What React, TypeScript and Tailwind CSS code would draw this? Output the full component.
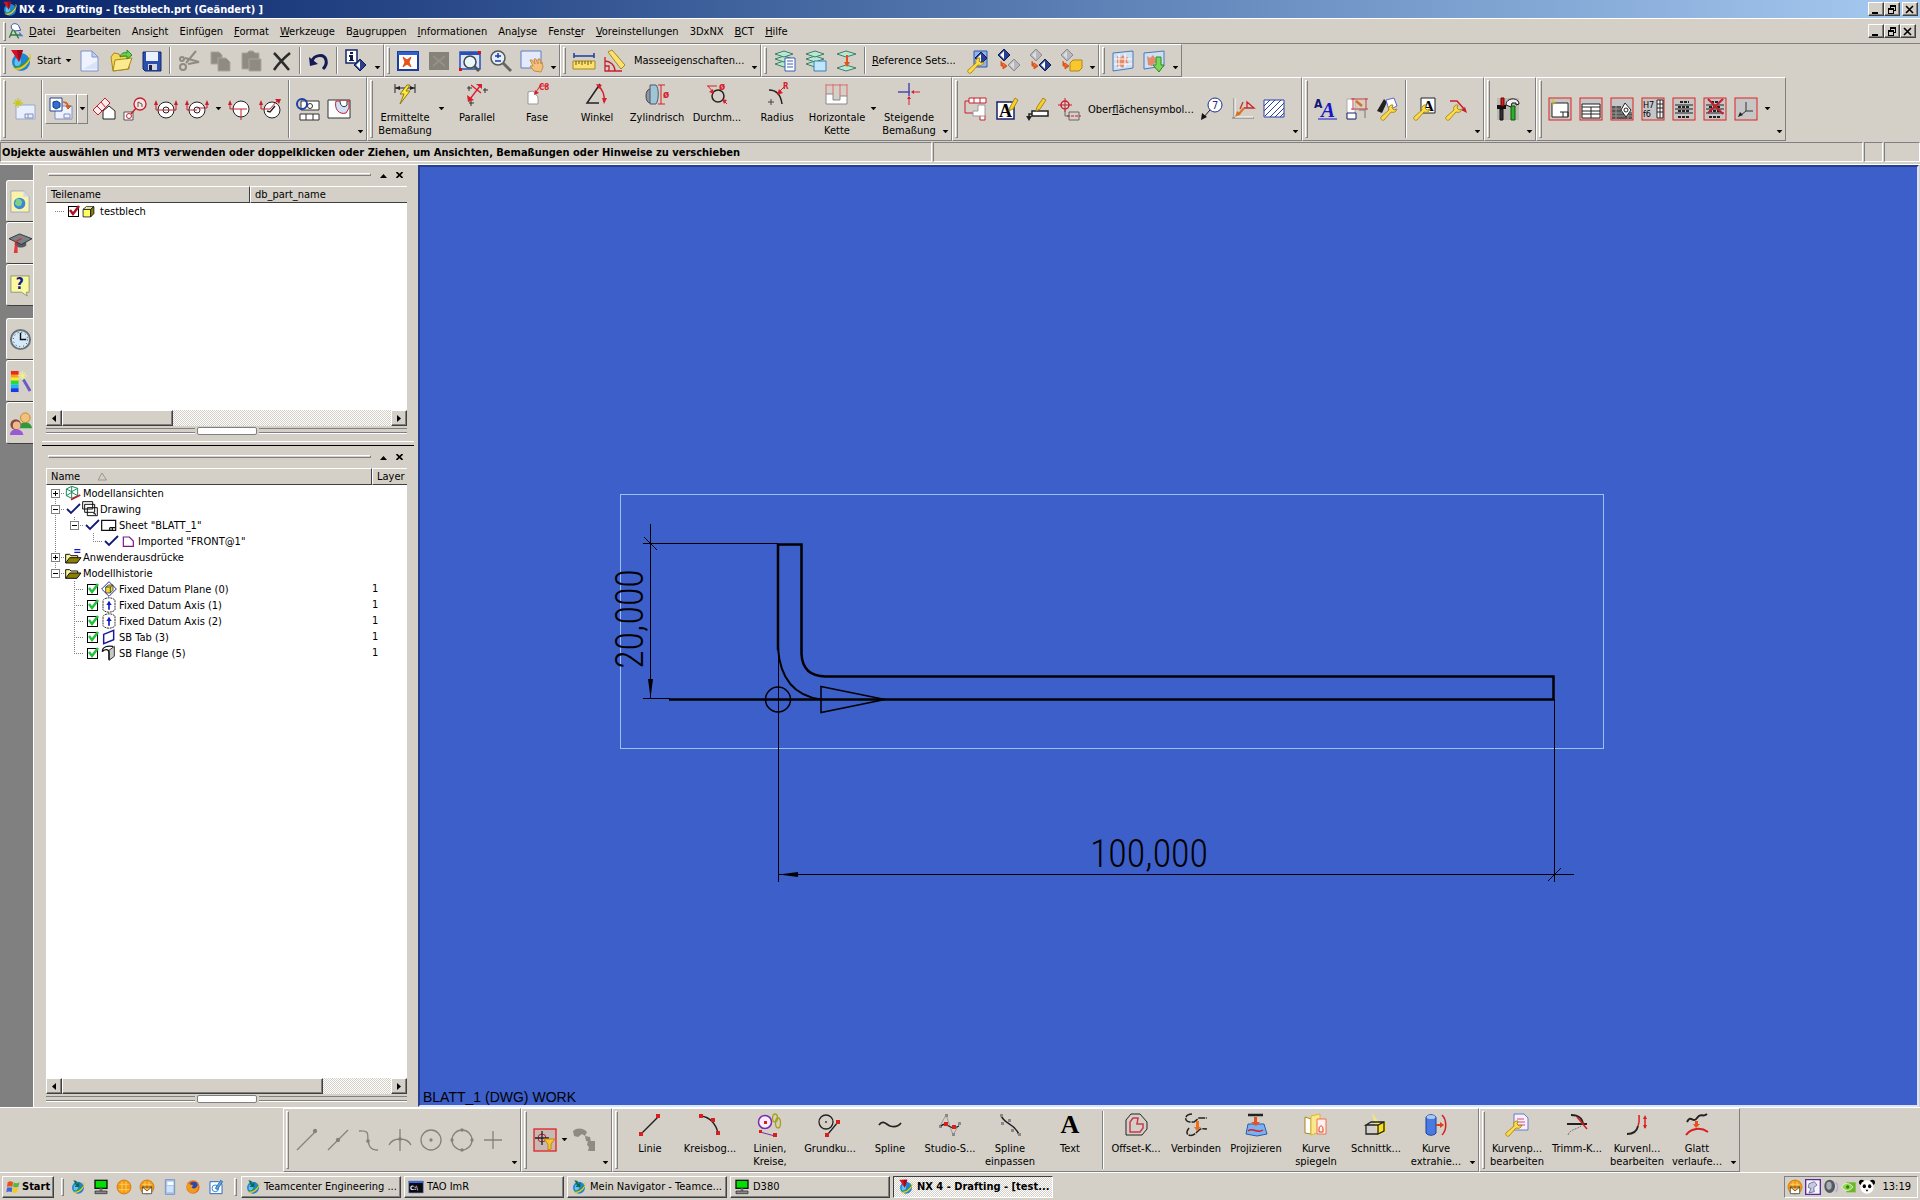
import type { ReactNode } from "react";

const RAISED =
  "bg-[#d4d0c8] border border-t-white border-l-white border-r-[#404040] border-b-[#404040] shadow-[inset_-1px_-1px_#808080]";
const DITHER =
  "bg-[repeating-conic-gradient(#ffffff_0_25%,#d4d0c8_0_50%)] bg-[length:2px_2px]";

/* ---------- icons, all on a 24x24 grid ---------- */

const globe = (
  <>
    <circle cx="12" cy="13" r="9" fill="#1f86d6" />
    <path d="M7 9c3-1 5 1 5 4s-3 4-3 6c-3-1-5-6-2-10z" fill="#5fc1f5" />
    <path d="M3 18c4 3 13 0 17-9 1-2 1-4-1-4 3-1 4 2 2 6-4 9-13 13-18 7z" fill="#f3c51d" />
    <path d="M5 17c4 2 11-1 15-8" stroke="#2f9a3b" fill="none" strokeWidth="1.5" />
  </>
);
const wrench = (
  <path
    d="M14 7c-2 1-3 3-2 5l-8 7c-1 2 1 4 3 3l7-8c3 1 5 0 6-3l-3 1-2-2 1-3z"
    fill="#f8dc4c"
    stroke="#b58a12"
  />
);
const layers = (
  <g fill="#b9e8d2" stroke="#3f7f6a">
    <path d="M2 15l9-3 9 3-9 3z" />
    <path d="M2 10l9-3 9 3-9 3z" />
    <path d="M2 5l9-3 9 3-9 3z" />
  </g>
);
const diamond = (x: number, y: number, on: boolean) => (
  <g transform={`translate(${x} ${y})`}>
    <path d="M6 0l6 6-6 6-6-6z" fill={on ? "#27408f" : "#b8b8bc"} stroke={on ? "#101c50" : "#8a8a90"} />
    <path d="M6 2v8L2 6z" fill={on ? "#ffffff" : "#dcdce0"} />
  </g>
);
const redArrow = <path d="M4 12v5h4M6 14l4 3-4 3z" fill="#e0541b" stroke="#e0541b" />;
const redBox = <rect x="1" y="1" width="22" height="22" fill="#c6c6c6" stroke="#e02020" />;
const circleView = (
  <>
    <circle cx="12" cy="13" r="8" fill="#fff" stroke="#222" />
    <circle cx="12" cy="13" r="3" fill="none" stroke="#222" />
  </>
);
const monitor = (
  <>
    <rect x="3" y="2" width="18" height="12" fill="#00e000" stroke="#111" strokeWidth="2" />
    <path d="M10 14h4v4h-4z" fill="#777" />
    <path d="M3 18h18v4H3z" fill="#888" stroke="#222" />
  </>
);
const orangeBall = (
  <>
    <circle cx="12" cy="12" r="10.500" fill="#f59a12" stroke="#c06a08" />
    <path d="M5 8h14M4 16h16M9 4v16M15 4v16" stroke="#fbd060" strokeWidth="1.5" />
  </>
);

const ICONS: Record<string, ReactNode> = {
  nx: (
    <>
      {globe}
      <path d="M2 1h12l-4 12z" fill="#d5112a" />
      <path d="M8 1h6l-4 12z" fill="#9c0b1d" />
    </>
  ),
  team: (
    <>
      {globe}
      <path d="M5 2l5 1v5l4-3v7H7l2-3z" fill="#0f6a4a" />
    </>
  ),
  compass: (
    <>
      <path d="M5 4c2-4 8-4 11 0l3 7-9 1-5-4z" fill="#fff" stroke="#3558b8" strokeWidth="1.5" />
      <path d="M7 10L2 22M9 11l7 12M4 18h14" fill="none" stroke="#2c7c3c" strokeWidth="2" />
      <path d="M17 13l6 7h-6z" fill="#4a78d8" />
    </>
  ),
  page: (
    <>
      <path d="M3 2h11l6 6v14H3z" fill="#eef3ff" stroke="#7d93c9" />
      <path d="M14 2v6h6z" fill="#c4d3f5" stroke="#7d93c9" />
      <path d="M5 20h14v-8z" fill="#d8e3fb" />
    </>
  ),
  open: (
    <>
      <path d="M2 8l3-4 5 1 1 2h9v13l-16 2z" fill="#f5d75c" stroke="#a98718" />
      <path d="M6 11l17-2-4 11-15 2z" fill="#fbeb8e" stroke="#a98718" />
      <path d="M11 8c1-4 4-5 7-4V1l5 5-5 4V7c-3 0-5 0-7 1z" fill="#6fce4a" stroke="#2b8a20" />
    </>
  ),
  save: (
    <>
      <path d="M3 3h18v19H5l-2-2z" fill="#2a4fae" stroke="#14286c" />
      <path d="M6 3h12v9H6z" fill="#e9f2ff" />
      <path d="M8 15h9v6H8z" fill="#cfd4dd" />
      <path d="M9 16h3v5H9z" fill="#16224f" />
    </>
  ),
  cut: (
    <g fill="none" stroke="#8f8b83" strokeWidth="2">
      <path d="M9 14L19 2M11 15l11-2-14-4" />
      <circle cx="6" cy="18" r="3" />
      <circle cx="5" cy="10" r="2" />
    </g>
  ),
  copy: (
    <g fill="#8f8b83" stroke="#a9a59d">
      <path d="M3 3h8l3 3v9H3z" />
      <path d="M10 9h8l4 4v9H10z" />
    </g>
  ),
  paste: (
    <g fill="#8f8b83" stroke="#a9a59d">
      <path d="M3 4h5l2-2h4l2 2h4v16H3z" />
      <path d="M10 10h12v12H10z" />
    </g>
  ),
  del: <path d="M4 4c5 5 9 10 15 17M20 4C14 9 8 15 4 21" stroke="#2b2b2b" strokeWidth="2.5" fill="none" />,
  undo: (
    <>
      <path d="M5 12c2-6 12-8 14-1 1 4-1 7-3 9" fill="none" stroke="#141a56" strokeWidth="3" />
      <path d="M2 8l1 9 8-2z" fill="#141a56" />
    </>
  ),
  info: (
    <>
      <rect x="2" y="1" width="11" height="13" fill="#fff" stroke="#16226b" strokeWidth="1.5" />
      <path d="M6 3h3v2H6zM5 6h4v5h1v1H5v-1h1V8H5z" fill="#101c50" />
      {diamond(10, 10, true)}
    </>
  ),
  fit: (
    <>
      <rect x="2" y="3" width="20" height="18" fill="#fff" stroke="#1b3f9e" strokeWidth="2" />
      <path d="M2 3h20v3H2z" fill="#2f62cf" />
      <path d="M7 8l4 3 4-3-2 5 2 5-4-3-4 3 2-5z" fill="#e2541a" stroke="#e2541a" />
    </>
  ),
  fitGrey: (
    <>
      <path d="M2 3h20v18H2z" fill="#85827a" />
      <path d="M6 7l12 10M18 7L6 17" stroke="#959188" strokeWidth="2" />
    </>
  ),
  zoomBox: (
    <>
      <path d="M2 3h20v17H2z" fill="#dbe6fb" stroke="#2a50b6" strokeWidth="1.5" />
      <path d="M2 3h20v3H2z" fill="#2a50b6" />
      <circle cx="12" cy="13" r="6" fill="#e8f8f8" stroke="#444" strokeWidth="1.5" />
      <path d="M16 17l5 5" stroke="#555" strokeWidth="3" />
      <path d="M1 19h3v3H1zM20 2h3v3h-3z" fill="#d01818" />
    </>
  ),
  zoom: (
    <>
      <circle cx="9" cy="9" r="7" fill="#e2effa" stroke="#555" strokeWidth="1.5" />
      <path d="M14 14l8 8" stroke="#666" strokeWidth="3" />
      <path d="M9 4v5M6 7h6M6 12h6" stroke="#203c96" strokeWidth="1.5" />
    </>
  ),
  pan: (
    <>
      <path d="M1 2h20v17H1z" fill="#e2eafc" stroke="#5f7ec4" />
      <path d="M14 22l-4-5 3 0-3-6 2 0 3 4-1-5 2 0 2 5 0-5 2 0 1 5 1-2 1 5-2 5z" fill="#f3c07e" stroke="#c98b45" />
    </>
  ),
  measure: (
    <>
      <path d="M2 4v5M22 4v5M2 7h20" stroke="#1b3f9e" strokeWidth="1.5" />
      <path d="M1 12h22v8H1z" fill="#fbe270" stroke="#a98718" />
      <path d="M4 12v4M7 12v3M10 12v4M13 12v3M16 12v4M19 12v3" stroke="#6b5510" />
    </>
  ),
  angle: (
    <>
      <path d="M2 8v14h17M2 12c5 0 10 4 10 10M2 17h4v5" fill="none" stroke="#c81e2c" strokeWidth="1.3" />
      <path d="M5 3l4-2 13 15-4 4z" fill="#fbe270" stroke="#a98718" />
    </>
  ),
  layer1: (
    <>
      {layers}
      <path d="M12 9h10v13H12z" fill="#fff" stroke="#3a5fb5" />
      <path d="M14 12h6M14 15h6M14 18h6" stroke="#3a5fb5" />
    </>
  ),
  layer2: (
    <>
      {layers}
      <path d="M10 12h12v10H10z" fill="#bfe6fb" stroke="#3a7fb5" />
    </>
  ),
  layer3: (
    <>
      <path d="M2 5l9-3 10 3-10 3zM2 19l9-3 10 3-10 3z" fill="#b9e8d2" stroke="#3f7f6a" />
      <path d="M12 6v10" stroke="#e0541b" strokeWidth="2" />
      <path d="M9 13h6l-3 5z" fill="#e0541b" />
    </>
  ),
  refEdit: (
    <>
      <path d="M8 2h13v16H8z" fill="#8fb2ee" stroke="#3356a5" />
      {diamond(9, 3, true)}
      <g transform="translate(-2 2)">{wrench}</g>
    </>
  ),
  ref1: (
    <>
      {diamond(1, 0, true)}
      {diamond(11, 10, false)}
      {redArrow}
    </>
  ),
  ref2: (
    <>
      {diamond(2, 0, false)}
      {diamond(11, 10, true)}
      {redArrow}
    </>
  ),
  ref3: (
    <>
      {diamond(2, 0, false)}
      <path d="M11 14l3-3h9v8l-3 3h-9z" fill="#f8c730" stroke="#a98718" />
      {redArrow}
    </>
  ),
  bct1: (
    <>
      <path d="M2 4l20-2v17L2 22z" fill="#cfe0f5" stroke="#4a78b8" />
      <path d="M6 7l3 2 3-3 2 3 3-1-1 4 2 2-4 1-2 4-3-2-3 1v-5z" fill="#e58a6a" />
      <path d="M8 5v14M14 4v14M3 10h18M3 15h18" stroke="#fff" />
    </>
  ),
  bct2: (
    <>
      <path d="M2 4l20-2v15L2 20z" fill="#cfe0f5" stroke="#4a78b8" />
      <path d="M5 7l3 2 3-3 2 3 1 4-4 4-4-1z" fill="#e58a6a" />
      <path d="M14 8h5v8h3l-5 7-6-7h3z" fill="#7dd65a" stroke="#2b8a20" />
    </>
  ),
  newSheet: (
    <>
      <path d="M4 8h19v14H4z" fill="#e9effc" stroke="#98a8cc" />
      <path d="M13 17h8v4h-8zM16 17v4" fill="none" stroke="#8090b8" />
      <path d="M6 1v10M1 6h10M3 3l6 6M9 3L3 9" stroke="#c8c820" strokeWidth="1.3" />
    </>
  ),
  baseView: (
    <>
      <path d="M6 9h17v13H6z" fill="#eef2ff" stroke="#8090b8" />
      <path d="M1 1h12v13H1z" fill="#fff" stroke="#26458f" />
      <path d="M4 5l4-1 3 2v4l-4 2-3-2z" fill="#2f6fd6" stroke="#133b86" />
      <path d="M14 5c4 0 5 1 5 4M17 9l2 3 3-3z" fill="#e0702b" stroke="#c0501b" />
      <path d="M15 17h6v4h-6z" fill="none" stroke="#8090b8" />
    </>
  ),
  auxView: (
    <>
      <path d="M1 13L13 1l5 5L6 18z" fill="#ffecec" stroke="#c81e2c" />
      <path d="M5 9l5 5M9 5l5 6" stroke="#c81e2c" />
      <path d="M11 22V14l6-5 6 5v8z" fill="#fff" stroke="#222" />
    </>
  ),
  detail: (
    <>
      <path d="M1 15h9v8H1z" fill="#fff" stroke="#555" />
      <circle cx="6" cy="19" r="2.5" fill="none" stroke="#c81e2c" />
      <path d="M8 17l6-7" stroke="#c81e2c" strokeWidth="1.5" />
      <circle cx="17" cy="7" r="6" fill="#fbe4e4" stroke="#c81e2c" strokeWidth="1.3" />
      <path d="M15 10V5l4 2v3" fill="none" stroke="#555" />
    </>
  ),
  section: (
    <>
      {circleView}
      <path d="M2 8v5h20V8" fill="none" stroke="#c81e2c" />
      <path d="M0 8l2-5 2 5zM20 8l2-5 2 5z" fill="#c81e2c" />
    </>
  ),
  halfSection: (
    <>
      {circleView}
      <path d="M2 8v5h10M12 11h10V7" fill="none" stroke="#c81e2c" />
      <path d="M0 8l2-5 2 5zM20 8l2-5 2 5z" fill="#c81e2c" />
    </>
  ),
  revolved: (
    <>
      <circle cx="13" cy="12" r="8" fill="#fff" stroke="#222" />
      <path d="M2 7v5h11v11M13 12h6" fill="none" stroke="#c81e2c" />
      <path d="M0 8l2-5 2 5z" fill="#c81e2c" />
    </>
  ),
  folded: (
    <>
      <circle cx="13" cy="13" r="8" fill="#fff" stroke="#222" />
      <path d="M2 7v5h9l7-8" fill="none" stroke="#c81e2c" />
      <path d="M0 8l2-5 2 5zM16 2h6l-2 5z" fill="#c81e2c" />
      <path d="M8 14l3 1 5-6" fill="none" stroke="#222" strokeWidth="1.5" />
    </>
  ),
  breakView: (
    <>
      <path d="M5 4h18v9H5zM4 17h19v6H4z" fill="#fff" stroke="#333" />
      <circle cx="6" cy="7" r="5" fill="none" stroke="#1e3fa8" strokeWidth="2" />
      <circle cx="14" cy="9" r="2.5" fill="none" stroke="#333" />
      <path d="M10 17v6M17 17v6" stroke="#333" />
    </>
  ),
  breakout: (
    <>
      <path d="M1 3h22v18H1z" fill="#fff" stroke="#333" />
      <path d="M9 4c-2 8 3 14 10 12l3-5V4z" fill="#cfe0f8" stroke="#c81e2c" />
      <path d="M13 4c0 6 5 7 7 4V4" fill="#fff" stroke="#333" />
    </>
  ),
  dimAuto: (
    <>
      <path d="M2 2v9M22 2v9M2 6h20" stroke="#222" />
      <path d="M2 6l5-2v4zM22 6l-5-2v4z" fill="#222" />
      <path d="M14 3l-7 9h4l-4 10 10-13h-4l4-6z" fill="#ffe83a" stroke="#8a7a10" />
    </>
  ),
  parallel: (
    <>
      <path d="M5 17L15 4M6 3l10 8" stroke="#d81e2c" strokeWidth="1.3" />
      <path d="M2 13l7 5-6 2zM11 2h6v5z" fill="#d81e2c" />
      <path d="M2 6h5M4 4v5M18 8h5M20 6v5M4 21h5M6 19v5" stroke="#333" />
    </>
  ),
  chamfer: (
    <>
      <path d="M3 22V10l5-1 5 6v7z" fill="#fff" stroke="#999" />
      <path d="M11 10l4-6h8" fill="none" stroke="#d81e2c" />
      <path d="M9 13l1-5 4 3z" fill="#d81e2c" />
      <text x="14" y="8" fontSize="8" fontWeight="bold" fill="#d81e2c">C8</text>
    </>
  ),
  angleDim: (
    <>
      <path d="M15 2L2 21h12" fill="none" stroke="#222" strokeWidth="1.5" />
      <path d="M13 4c5 3 7 10 6 16" fill="none" stroke="#d81e2c" strokeWidth="1.5" />
      <path d="M11 2l6 1-3 4zM17 16h5l-3 6z" fill="#d81e2c" />
    </>
  ),
  cylinder: (
    <>
      <ellipse cx="5" cy="14" rx="4" ry="7" fill="#8a98a8" stroke="#444" />
      <path d="M5 3h6c3 3 3 15 0 19H5z" fill="#9fc6d4" stroke="#556" />
      <path d="M13 3h7M13 22h7M16 3v19" stroke="#d81e2c" />
      <text x="18" y="16" fontSize="10" fontWeight="bold" fill="#d81e2c">ø</text>
    </>
  ),
  diameter: (
    <>
      <circle cx="13" cy="14" r="6" fill="none" stroke="#222" strokeWidth="1.5" />
      <path d="M2 4h10M3 4l5 6M18 18l4 4" stroke="#d81e2c" />
      <path d="M9 12l-5-2 4-3zM17 17l5 1-3 4z" fill="#d81e2c" />
      <text x="14" y="8" fontSize="10" fontWeight="bold" fill="#d81e2c">ø</text>
    </>
  ),
  radius: (
    <>
      <path d="M4 8c8 0 12 6 13 14" fill="none" stroke="#222" strokeWidth="1.5" />
      <path d="M3 20h6M6 17v6" stroke="#444" />
      <path d="M14 10l5-5" stroke="#d81e2c" />
      <path d="M12 13l2-6 4 4z" fill="#d81e2c" />
      <text x="18" y="7" fontSize="8" fontWeight="bold" fill="#d81e2c">R</text>
    </>
  ),
  chain: (
    <>
      <path d="M1 22V12h7v6h7v-4h7v8z" fill="#fff" stroke="#888" />
      <path d="M1 12V2M8 12V2M15 14V2M22 14V2M1 3h21" stroke="#d86a6a" />
    </>
  ),
  ordinate: (
    <>
      <path d="M1 10h12M12 1v13" stroke="#4a4ab0" strokeWidth="1.5" />
      <path d="M16 10h7M12 16v7" stroke="#d81e2c" />
      <path d="M17 8l-3 2 3 2zM10 17l2-3 2 3z" fill="#d81e2c" />
    </>
  ),
  fcf: (
    <>
      <path d="M5 1h17v5H5zM10 1v5M16 1v5M16 18h5v5h-5z" fill="#fff" stroke="#c81e2c" />
      <path d="M5 4H1v12h3M4 16h5" fill="none" stroke="#c81e2c" />
      <path d="M9 19V14h5V8h7v11z" fill="#fff" stroke="#999" />
    </>
  ),
  note: (
    <>
      <path d="M2 5h17v17H2z" fill="#fff" stroke="#16226b" strokeWidth="1.5" />
      <text x="4" y="20" fontSize="18" fontWeight="bold" fontFamily="Liberation Serif">A</text>
      <path d="M15 10l5-9 3 2-5 9-4 2z" fill="#f5d030" stroke="#a98718" />
    </>
  ),
  leader: (
    <>
      <path d="M6 14h16v5H6z" fill="#fff" stroke="#222" strokeWidth="1.5" />
      <path d="M6 17H3v5" fill="none" stroke="#222" strokeWidth="1.5" />
      <path d="M0 19h6l-3 5z" fill="#222" />
      <path d="M11 10l6-9 3 2-6 9-4 2z" fill="#f5d030" stroke="#a98718" />
    </>
  ),
  target: (
    <>
      <circle cx="8" cy="8" r="4" fill="none" stroke="#c81e2c" strokeWidth="1.5" />
      <path d="M1 8h14M8 1v14" stroke="#c81e2c" />
      <path d="M8 13v6h4M12 15h10v8H12z" fill="none" stroke="#666" />
      <path d="M10 19h14" stroke="#c81e2c" strokeDasharray="3 1" />
    </>
  ),
  balloon: (
    <>
      <circle cx="15" cy="8" r="7" fill="#fff" stroke="#1e2f8f" />
      <text x="12" y="12" fontSize="11" fill="#1e2f8f">7</text>
      <path d="M10 13l-7 8" stroke="#222" />
      <path d="M1 23l1-7 5 4z" fill="#111" />
    </>
  ),
  surface: (
    <>
      <path d="M3 1v20M1 21h22" stroke="#777" />
      <path d="M4 1v19h18" stroke="#fff" fill="none" />
      <path d="M23 11l-7-6v6zM23 11H13M12 5L9 12" fill="none" stroke="#c82a2a" strokeWidth="1.3" />
      <path d="M13 11L7 18" stroke="#d8701e" strokeWidth="2" />
      <path d="M4 20l2-6 4 3z" fill="#d8701e" />
    </>
  ),
  hatch: (
    <>
      <path d="M2 3h20v17H2z" fill="#fff" stroke="#2a3fa8" />
      <path d="M2 9l6-6M2 14L13 3M3 19L19 3M8 20L22 6M13 20l9-9M18 20l4-4" stroke="#2a3fa8" />
    </>
  ),
  textStyle: (
    <>
      <text x="0" y="11" fontSize="12" fontWeight="bold" fill="#101878">A</text>
      <text x="7" y="20" fontSize="21" fontWeight="bold" fontStyle="italic" fontFamily="Liberation Serif" fill="#1418c8">A</text>
      <path d="M4 22h19" stroke="#1418c8" />
    </>
  ),
  viewEdit: (
    <>
      <path d="M2 2h8v20H2zM3 17h7" fill="#fff" stroke="#aaa" />
      <path d="M6 2h17M6 12h17M8 1v12M21 1v12" stroke="#c84040" />
      <path d="M2 16h9v6H2z" fill="#fff" stroke="#16226b" />
      <path d="M11 4l6 5" stroke="#d8701e" strokeWidth="2.5" />
      <path d="M14 13h6v8" fill="none" stroke="#777" />
    </>
  ),
  styleEdit: (
    <>
      <path d="M1 14l7-12 3 3-5 11z" fill="#222" />
      <path d="M10 3l8-2 3 8-8 4z" fill="#fff" stroke="#5868c8" />
      <g transform="translate(1 1)">{wrench}</g>
    </>
  ),
  noteEdit: (
    <>
      <path d="M8 1h14v15H8z" fill="#fff" stroke="#222" />
      <text x="10" y="14" fontSize="15" fontWeight="bold" fontFamily="Liberation Serif">A</text>
      <g transform="translate(-3 1)">{wrench}</g>
    </>
  ),
  leaderEdit: (
    <>
      <path d="M6 4h7l8 9" fill="none" stroke="#c81e2c" strokeWidth="1.5" />
      <path d="M23 16l-6-3 4-3z" fill="#c81e2c" />
      <g transform="translate(-2 1)">{wrench}</g>
    </>
  ),
  tools: (
    <>
      <path d="M1 1h22v22H1z" fill="#bdbab2" />
      <path d="M1 8h9v4H1z" fill="#111" />
      <path d="M4 12h3v11H4z" fill="#333" stroke="#111" />
      <path d="M5 1h3v8H5z" fill="#d81e1e" stroke="#600" />
      <path d="M10 8c0-8 13-8 13-1l-3 1v-2h-4l-1 4z" fill="#eee" stroke="#111" />
      <path d="M15 9h4v14h-4z" fill="#2fae2f" stroke="#0a5a0a" />
    </>
  ),
  tab1: (
    <>
      {redBox}
      <path d="M4 6h16v14H4zM12 15h8v5M15 15v5" fill="#fff" stroke="#222" />
      <path d="M5 2v6M2 5h6" stroke="#c8c820" />
    </>
  ),
  tab2: (
    <>
      {redBox}
      <path d="M3 7h18v14H3z" fill="#fff" stroke="#222" />
      <path d="M3 10h18M3 14h18M3 17h18M12 10v11" stroke="#222" />
    </>
  ),
  tab3: (
    <>
      {redBox}
      <path d="M2 9h9v13H2zM11 15h11v7H11z" fill="#555" />
      <path d="M2 12h9M2 16h20M2 19h20M6 9v13M18 15v7" stroke="#999" />
      <path d="M15 6l6 7-5 7-5-7z" fill="#fff" stroke="#222" />
      <circle cx="16" cy="13" r="2" fill="none" stroke="#222" />
    </>
  ),
  tab4: (
    <>
      {redBox}
      <text x="2" y="11" fontSize="9">H7</text>
      <text x="2" y="20" fontSize="9">f6</text>
      <path d="M16 3h6v18h-6zM19 3v18M16 7h6M16 11h6M16 15h6" fill="#fff" stroke="#222" />
    </>
  ),
  tab5: (
    <>
      {redBox}
      <path d="M3 8h18M3 12h18M3 16h18" stroke="#222" />
      <path d="M8 5h9M6 10h12M6 14h12M6 20h12" stroke="#222" strokeDasharray="3 1" strokeWidth="2" />
    </>
  ),
  tab6: (
    <>
      {redBox}
      <path d="M3 8h18M3 12h18M3 16h18" stroke="#222" />
      <path d="M8 5h9M6 10h12M6 14h12M6 20h12" stroke="#222" strokeDasharray="3 1" strokeWidth="2" />
      <path d="M5 2l15 15M20 2L5 16" stroke="#c81e2c" strokeWidth="2" />
    </>
  ),
  tab7: (
    <>
      {redBox}
      <path d="M12 5v9h7M12 14l-5 4" fill="none" stroke="#333" />
      <path d="M4 20l2-5 3 3z" fill="#222" />
    </>
  ),
  gLine: (
    <g stroke="#85827a" strokeWidth="1.3" fill="#85827a">
      <path d="M2 22L20 4" />
      <circle cx="20" cy="3" r="1.5" />
    </g>
  ),
  gMid: (
    <g stroke="#85827a" strokeWidth="1.3" fill="#85827a">
      <path d="M2 22L22 2" />
      <circle cx="12" cy="12" r="1.5" />
    </g>
  ),
  gSpline: (
    <g stroke="#85827a" strokeWidth="1.3" fill="none">
      <path d="M2 3c12-1 8 5 9 10s2 9 10 9" />
      <circle cx="11" cy="13" r="1.2" fill="#85827a" />
    </g>
  ),
  gArc: (
    <g stroke="#85827a" strokeWidth="1.3" fill="none">
      <path d="M1 17c4-8 18-8 22 0M12 1v22" />
      <circle cx="12" cy="11" r="1.2" fill="#85827a" />
    </g>
  ),
  gCenter: (
    <g stroke="#85827a" strokeWidth="1.3" fill="none">
      <circle cx="12" cy="12" r="10" />
      <circle cx="12" cy="12" r="1" fill="#85827a" />
    </g>
  ),
  gQuad: (
    <g stroke="#85827a" strokeWidth="1.3" fill="none">
      <circle cx="12" cy="12" r="10" />
      <g fill="#85827a">
        <circle cx="12" cy="2" r="1" />
        <circle cx="12" cy="22" r="1" />
        <circle cx="2" cy="12" r="1" />
        <circle cx="22" cy="12" r="1" />
      </g>
    </g>
  ),
  gPlus: <path d="M12 3v18M3 12h18" stroke="#85827a" strokeWidth="1.3" />,
  filter: (
    <>
      <rect x="1" y="1" width="22" height="22" fill="#c9b9b4" stroke="#e02020" strokeWidth="1.3" />
      <circle cx="9" cy="10" r="4" fill="none" stroke="#c81e2c" />
      <path d="M2 10h14M9 3v14" stroke="#222" strokeWidth="1.3" />
      <path d="M11 11h11l-4 5v5l-3 1v-6z" fill="#f8c730" stroke="#c08a12" />
    </>
  ),
  gChain: (
    <g fill="#8f8b83">
      <path d="M1 3c4-4 11-3 14 1l-2 4-3-2-4 3-4-1z" />
      <path d="M13 8l5 1 1 5-5-1zM16 13h7v10h-7l1-4-2-2z" />
    </g>
  ),
  line: (
    <>
      <path d="M3 21L20 4" stroke="#222" strokeWidth="1.5" />
      <path d="M1 19h4v4H1zM18 1h4v4h-4z" fill="#d81e1e" />
    </>
  ),
  arc: (
    <>
      <path d="M3 3c9 1 15 8 17 17" fill="none" stroke="#222" strokeWidth="1.5" />
      <path d="M1 1h4v4H1zM13 5h4v4h-4zM18 18h4v4h-4z" fill="#d81e1e" />
    </>
  ),
  linesCircles: (
    <>
      <circle cx="7" cy="9" r="6.5" fill="#f4ecff" stroke="#7a2ca8" strokeWidth="1.5" />
      <path d="M2 19l15 4" stroke="#7a2ca8" />
      <path d="M6 8h3v3H6zM1 17h3v3H1zM15 20h4v4h-4z" fill="#d81e1e" />
      <g fill="none" stroke="#a8a010" strokeWidth="1.3">
        <ellipse cx="17" cy="5" rx="2.5" ry="4" />
        <ellipse cx="20" cy="10" rx="2.5" ry="5" />
      </g>
    </>
  ),
  basic: (
    <>
      <circle cx="8" cy="9" r="7" fill="none" stroke="#222" strokeWidth="1.3" />
      <path d="M8 8v2M10 21L20 9" stroke="#222" strokeWidth="1.3" />
      <path d="M7 20h4v4H7zM18 7h4v4h-4z" fill="#d81e1e" />
    </>
  ),
  spline: <path d="M1 12c4-6 8 0 11 1s7 2 11-3" fill="none" stroke="#222" strokeWidth="1.8" />,
  studio: (
    <>
      <path d="M2 13L8 2l7 20 7-12" fill="none" stroke="#999" />
      <path d="M7 1h3v3H7zM1 12h3v3H1zM14 20h3v3h-3zM20 9h3v3h-3z" fill="#888" />
      <path d="M3 13c6-6 8 6 18 0" fill="none" stroke="#222" strokeWidth="1.3" />
      <path d="M6 9h4v4H6zM14 12h4v4h-4z" fill="#d81e1e" />
    </>
  ),
  fitSpline: (
    <>
      <path d="M3 2c3 10 14 8 18 20" fill="none" stroke="#222" strokeWidth="1.5" />
      <path d="M2 1h3v3H2zM10 6h3v3h-3zM3 9h3v3H3zM13 16h3v3h-3zM20 20h3v3h-3z" fill="#888" />
    </>
  ),
  text: (
    <text x="12" y="20" textAnchor="middle" fontSize="26" fontWeight="bold" fontFamily="Liberation Serif">A</text>
  ),
  offset: (
    <>
      <path d="M2 22V7l5-6h9l7 8v7l-5 6z" fill="none" stroke="#222" />
      <path d="M6 19V9l3-4h5l-1 6h6v4l-3 4z" fill="none" stroke="#c83a4c" strokeWidth="1.5" />
    </>
  ),
  bridge: (
    <>
      <path d="M8 1c-8 0-8 8-2 8h4l5-4h8M5 15c-6 8 3 9 7 5s4-5 11-4" fill="none" stroke="#222" strokeWidth="1.5" strokeDasharray="7 1" />
      <path d="M12 8h3v6h2l-4 4-3-4h2z" fill="#e8701e" />
    </>
  ),
  project: (
    <>
      <path d="M4 2h15" stroke="#222" strokeWidth="2.5" />
      <path d="M4 11l16 0 3 10-10 2-11-2z" fill="#7ab0f0" stroke="#2a5ab0" />
      <path d="M4 18c5-4 9 3 15-1" fill="none" stroke="#d81e1e" strokeWidth="1.5" />
      <path d="M10 4h3v5h3l-4 4-5-4h3z" fill="#e8501e" />
    </>
  ),
  mirror: (
    <>
      <path d="M1 4l6 2v15l-6-1z" fill="#fff" stroke="#a98718" />
      <path d="M7 3l9-2v18l-9 3z" fill="#fbe88a" stroke="#d8b830" />
      <path d="M13 6h9v15h-9z" fill="#fff0ee" stroke="#e87050" />
      <path d="M15 16c0-4 4-4 4 0v3h-4z" fill="none" stroke="#d8401e" />
    </>
  ),
  sectionCurve: (
    <>
      <path d="M8 0l14 19-8 3z" fill="#f8ea70" />
      <path d="M14 12l8-3v9l-8 4z" fill="#f8e020" />
      <path d="M2 12l5-3h13l-6 3zM2 12h12v9H2zM14 12l6-3v9l-6 3z" fill="none" stroke="#222" strokeWidth="1.3" />
    </>
  ),
  extract: (
    <>
      <path d="M2 4c2-3 8-3 10 0v16c-2 3-8 3-10 0z" fill="#4a7ae0" stroke="#1b3f9e" />
      <ellipse cx="7" cy="4" rx="4.500" ry="2" fill="#a8c8f8" />
      <path d="M12 12h5" stroke="#d8401e" strokeWidth="2" />
      <path d="M16 9l4 3-4 3z" fill="#d8401e" />
      <path d="M18 2c5 5 5 15 0 20" fill="none" stroke="#d81e1e" strokeWidth="1.5" />
    </>
  ),
  curveParam: (
    <>
      <path d="M9 1h10l4 4v12H9z" fill="#f4f0ff" stroke="#6a78c8" />
      <path d="M12 6h7M12 9h8M12 12h8" stroke="#d84a6a" />
      <g transform="translate(-3 1)">{wrench}</g>
    </>
  ),
  trim: (
    <>
      <path d="M6 2c8 0 12 4 12 10M2 11h20" fill="none" stroke="#222" strokeWidth="1.8" />
      <path d="M12 4l10 12" stroke="#d81e1e" strokeWidth="1.5" />
      <path d="M3 22c2-6 8-5 13-9" fill="none" stroke="#777" strokeDasharray="2 1" />
    </>
  ),
  curveLen: (
    <>
      <path d="M2 21c7 0 10-3 11-8" fill="none" stroke="#222" strokeWidth="1.8" />
      <path d="M13 13c2-4 1-8 1-11M20 4v11" fill="none" stroke="#d81e1e" strokeWidth="1.5" />
      <path d="M18 6l2-4 2 4zM18 12l2 4 2-4z" fill="#d81e1e" />
    </>
  ),
  smooth: (
    <>
      <path d="M2 9c4-8 6 2 10-4s5 0 10-4" fill="none" stroke="#222" strokeWidth="2" />
      <path d="M10 8h3v3h2l-4 4-3-4h2z" fill="#e8501e" />
      <path d="M1 22c5-7 15-8 22-3" fill="none" stroke="#d81e1e" strokeWidth="2" />
    </>
  ),
  rsPage: (
    <>
      <path d="M2 1h13l6 6v16H2z" fill="#fbf3a8" stroke="#a0a8c0" />
      <path d="M15 1v6h6z" fill="#cfd8f0" />
      <circle cx="11" cy="14" r="6" fill="#3a86d8" />
      <path d="M8 9c4 0 7 2 5 6s-6 1-7-1z" fill="#7ad08a" />
    </>
  ),
  rsHat: (
    <>
      <path d="M6 8v6c4 3 9 3 12 0V8z" fill="#555a60" />
      <path d="M0 7l11-5 13 5-11 6z" fill="#7a8088" stroke="#333" />
      <path d="M13 7l-6 3v5" fill="none" stroke="#d82a2a" strokeWidth="1.5" />
      <path d="M6 14h3v8H5z" fill="#e03a3a" />
    </>
  ),
  rsHelp: (
    <>
      <path d="M2 2h19v17h-3l1 4-6-4H2z" fill="#fbf8a0" stroke="#8a9a70" />
      <text x="7" y="16" fontSize="16" fontWeight="bold" fill="#141a8c">?</text>
    </>
  ),
  rsClock: (
    <>
      <circle cx="12" cy="12" r="10" fill="#d5eaf8" stroke="#6a727c" strokeWidth="2" />
      <circle cx="12" cy="12" r="7.5" fill="none" stroke="#333" strokeDasharray="1 3" />
      <path d="M12 5v7h6" fill="none" stroke="#111" strokeWidth="1.5" />
    </>
  ),
  rsColors: (
    <>
      <path d="M2 1h8v4H2z" fill="#e82a1a" />
      <path d="M2 5h8v3H2z" fill="#f8a01a" />
      <path d="M2 8h8v3H2z" fill="#f8f01a" />
      <path d="M2 11h8v4H2z" fill="#2ad83a" />
      <path d="M2 15h8v4H2z" fill="#1ab8f0" />
      <path d="M2 19h8v4H2z" fill="#1a3ae0" />
      <path d="M14 1v10M9 6h10M11 3l6 6M17 3l-6 6" stroke="#f0f08a" strokeWidth="1.3" />
      <path d="M15 10l7 12" stroke="#6a5ac8" strokeWidth="3" />
    </>
  ),
  rsPeople: (
    <>
      <path d="M11 15c1-6 12-6 13 2H11z" fill="#2f9a3b" />
      <circle cx="17" cy="6" r="5" fill="#f3c07e" stroke="#c8861e" />
      <path d="M1 24c0-8 13-8 14 0z" fill="#9a5ad8" />
      <circle cx="7" cy="13" r="5.500" fill="#8a4a3a" />
      <circle cx="8" cy="14" r="4" fill="#f0b890" />
    </>
  ),
  windows: (
    <>
      <path d="M4 5c3-2 5-2 8 0l-1 7c-3-2-5-1-8 0z" fill="#e8501e" />
      <path d="M13 5c3 2 5 2 9 0l-2 7c-3 1-5 1-8 0z" fill="#5cb83a" />
      <path d="M3 13c3-1 5-1 8 0l-1 7c-3-2-5-1-8 0z" fill="#3a6ad8" />
      <path d="M12 13c3 1 5 1 8 0l-2 7c-3 2-5 1-7 0z" fill="#f8c81e" />
    </>
  ),
  monitor,
  ball: orangeBall,
  ballMail: (
    <>
      {orangeBall}
      <path d="M5 12h14v10H5zM5 12l7 6 7-6" fill="#fff" stroke="#222" />
    </>
  ),
  phone: (
    <>
      <path d="M5 1h14v22H5z" fill="#a8c8f0" stroke="#5a7ab0" />
      <path d="M8 4h9v5H8z" fill="#fff" />
      <path d="M8 12h9M8 15h9M8 18h9" stroke="#fff" strokeWidth="2" strokeDasharray="2 1" />
    </>
  ),
  firefox: (
    <>
      <circle cx="12" cy="12" r="10" fill="#e8701e" />
      <circle cx="13" cy="10" r="6" fill="#2a4aa8" />
      <path d="M3 6c3 1 5 3 9 3l-2 4c4 3 8 0 9-4 2 7-3 12-8 12S1 15 3 6z" fill="#f09a1e" />
    </>
  ),
  editDoc: (
    <>
      <path d="M3 4h13l5 4v14H3z" fill="#fff" stroke="#2a6ac8" strokeWidth="1.5" />
      <circle cx="11" cy="14" r="5" fill="none" stroke="#2a8ad8" strokeWidth="1.5" />
      <path d="M11 14l8-12 3 2-8 12z" fill="#5aa8e8" stroke="#1a4a98" />
    </>
  ),
  cmd: (
    <>
      <path d="M1 3h22v18H1z" fill="#0a0a14" stroke="#8a98b8" />
      <path d="M1 3h22v3H1z" fill="#3a6ad8" />
      <text x="3" y="17" fontSize="9" fontWeight="bold" fill="#fff">C:\</text>
    </>
  ),
  trayPen: (
    <>
      <path d="M1 1h22v22H1z" fill="#f4f4ff" stroke="#5a2a98" strokeWidth="2" />
      <path d="M6 7l8-3 4 5-5 4 1 6-8 2 3-7-4-1z" fill="#c8c8e0" stroke="#4a4a78" />
    </>
  ),
  speaker: (
    <>
      <ellipse cx="10" cy="11" rx="8" ry="10" fill="#555a60" />
      <ellipse cx="9" cy="10" rx="4" ry="6" fill="#a8acb4" />
      <path d="M19 5c4 4 4 10 0 15" fill="none" stroke="#b0a8e0" strokeWidth="2" />
    </>
  ),
  nvidia: (
    <>
      <path d="M8 5h14v15H8z" fill="#6ab82a" />
      <path d="M1 12c4-7 12-7 17 0-5 7-13 7-17 0z" fill="#8ad84a" stroke="#fff" />
      <circle cx="10" cy="12" r="2.5" fill="#3a7a1a" />
    </>
  ),
  panda: (
    <>
      <circle cx="4" cy="5" r="4" />
      <circle cx="20" cy="5" r="4" />
      <ellipse cx="12" cy="12" rx="10" ry="10" fill="#fff" />
      <ellipse cx="8" cy="11" rx="2.5" ry="3" />
      <ellipse cx="16" cy="11" rx="2.5" ry="3" />
      <path d="M10 16h4l-2 3z" />
    </>
  ),
  cube: (
    <>
      <path d="M2 8h14v14H2z" fill="#ffff66" stroke="#111" strokeWidth="1.5" />
      <path d="M2 8l6-5h14l-6 5z" fill="#ffffa8" stroke="#111" strokeWidth="1.5" />
      <path d="M22 3v13l-6 6V8z" fill="#888000" stroke="#111" strokeWidth="1.5" />
    </>
  ),
  views: (
    <>
      <path d="M2 6l8-4 9 3v11l-9 4-8-4zM2 6l8 4 9-5M10 10v10M10 2v8M2 16l8-5 9 5" fill="none" stroke="#1e8a5a" strokeWidth="1.5" />
      <path d="M9 22l14-7" stroke="#c81e2c" strokeWidth="2.5" />
    </>
  ),
  sheets: (
    <g fill="#fff" stroke="#111" strokeWidth="1.5">
      <path d="M1 1h15v11H1zM4 5h15v12H4zM8 10h15v12H8z" />
      <path d="M17 19h3v3" />
    </g>
  ),
  sheet: (
    <g fill="#fff" stroke="#111" strokeWidth="1.8">
      <path d="M1 5h21v15H1z" />
      <path d="M13 16h9M13 16v4M17 16v4" />
    </g>
  ),
  imported: <path d="M5 6h9l6 6v8H5z" fill="#fff" stroke="#7a1a8a" strokeWidth="1.8" />,
  folder: (
    <>
      <path d="M1 20V7h6l2 2h10v3" fill="#fbf59a" stroke="#111" strokeWidth="1.5" />
      <path d="M1 20l6-8h17l-6 8z" fill="#8a8000" stroke="#111" strokeWidth="1.5" />
    </>
  ),
  folderEq: (
    <>
      <path d="M1 21V8h6l2 2h10v3" fill="#fbf59a" stroke="#111" strokeWidth="1.5" />
      <path d="M1 21l6-8h17l-6 8z" fill="#8a8000" stroke="#111" strokeWidth="1.5" />
      <path d="M14 1h9M14 5h9" stroke="#1418c8" strokeWidth="1.8" />
    </>
  ),
  plane: (
    <>
      <path d="M12 1l11 11-11 11L1 12z" fill="#fff" stroke="#2a2aa0" strokeWidth="1.5" />
      <path d="M7 9l4-3h7v8l-4 4H7z" fill="#e8d83a" stroke="#333" strokeWidth="1.2" />
      <path d="M7 9h7v9M14 9l4-3" fill="none" stroke="#333" strokeWidth="1.2" />
    </>
  ),
  axis: (
    <>
      <path d="M3 5c3-5 15-5 18 0v14c-3 5-15 5-18 0z" fill="#fff" stroke="#333" strokeWidth="1.5" strokeDasharray="3 1" />
      <path d="M12 19V7" fill="none" stroke="#1418c8" strokeWidth="2.5" />
      <path d="M8 12l4-6 4 6z" fill="#1418c8" />
    </>
  ),
  tab: <path d="M4 8l15-6v14L4 22z" fill="#fff" stroke="#1a1a9a" strokeWidth="2.2" />,
  flange: (
    <>
      <path d="M12 8l8-6v15l-8 6z" fill="#c8c8c8" stroke="#333" strokeWidth="1.5" />
      <path d="M2 10c0-8 8-9 16-8M2 10c2-3 10-6 10 2v10" fill="none" stroke="#111" strokeWidth="2" />
    </>
  ),
};

function Icon({ name, size = 24 }: { name: string; size?: number }) {
  return (
    <svg width={size} height={size} viewBox="0 0 24 24" className="shrink-0 overflow-visible" aria-hidden="true">
      {ICONS[name]}
    </svg>
  );
}

// "&" marks the accelerator letter
function Accel({ text }: { text: string }) {
  const i = text.indexOf("&");
  if (i < 0) return <>{text}</>;
  return (
    <>
      {text.slice(0, i)}
      <span className="underline underline-offset-1">{text[i + 1]}</span>
      {text.slice(i + 2)}
    </>
  );
}

function Caret() {
  return (
    <svg width="7" height="4" viewBox="0 0 7 4" className="shrink-0" aria-hidden="true">
      <path d="M1 0h5L3.500 3z" stroke="#000" strokeWidth="0.500" />
    </svg>
  );
}

/* ---------- toolbars ---------- */

function Toolbar({ label, children }: { label: string; children: ReactNode }) {
  return (
    <div
      role="toolbar"
      aria-label={label}
      className="flex shrink-0 border border-t-white border-l-white border-r-[#808080] border-b-[#808080]"
    >
      <div className="my-[2px] ml-[2px] mr-[2px] w-[3px] border border-t-white border-l-white border-r-[#808080] border-b-[#808080]" />
      {children}
    </div>
  );
}

function ToolIcon({ name }: { name: string }) {
  return (
    <button type="button" aria-label={name} className="flex w-[31px] items-center justify-center">
      <Icon name={name} />
    </button>
  );
}

function Tools({ names }: { names: string[] }) {
  return names.map((n) => <ToolIcon key={n} name={n} />);
}

function ToolText({ text, width }: { text: string; width: string }) {
  return (
    <button type="button" className={`${width} whitespace-nowrap pl-1 text-left`}>
      <Accel text={text} />
    </button>
  );
}

function ToolLabel({ icon, text }: { icon: string; text: string }) {
  return (
    <button type="button" className="flex w-[60px] flex-col items-center pt-1">
      <Icon name={icon} />
      <span className="mt-[5px] whitespace-pre text-center leading-[13px]">{text}</span>
    </button>
  );
}

function Drop({ narrow }: { narrow?: boolean }) {
  return (
    <button
      type="button"
      aria-label="Auswahl"
      className={narrow ? "flex w-2 items-center justify-center" : "flex w-3 items-center justify-center"}
    >
      <Caret />
    </button>
  );
}

function More() {
  return (
    <button type="button" aria-label="Weitere" className="flex w-3 items-end justify-center pb-[6px]">
      <Caret />
    </button>
  );
}

function Sep() {
  return <div className="mx-[2px] my-[2px] w-[2px] border-l border-l-[#808080] border-r border-r-white" />;
}

const LABELS_DIM = [
  ["parallel", "Parallel"],
  ["chamfer", "Fase"],
  ["angleDim", "Winkel"],
  ["cylinder", "Zylindrisch"],
  ["diameter", "Durchm..."],
  ["radius", "Radius"],
  ["chain", "Horizontale\nKette"],
];

const LABELS_CURVE = [
  ["line", "Linie"],
  ["arc", "Kreisbog..."],
  ["linesCircles", "Linien,\nKreise,"],
  ["basic", "Grundku..."],
  ["spline", "Spline"],
  ["studio", "Studio-S..."],
  ["fitSpline", "Spline\neinpassen"],
  ["text", "Text"],
];

const LABELS_DERIVED = [
  ["offset", "Offset-K..."],
  ["bridge", "Verbinden"],
  ["project", "Projizieren"],
  ["mirror", "Kurve\nspiegeln"],
  ["sectionCurve", "Schnittk..."],
  ["extract", "Kurve\nextrahie..."],
];

const LABELS_EDIT = [
  ["curveParam", "Kurvenp...\nbearbeiten"],
  ["trim", "Trimm-K..."],
  ["curveLen", "Kurvenl...\nbearbeiten"],
  ["smooth", "Glatt\nverlaufe..."],
];

function Labels({ items }: { items: string[][] }) {
  return items.map(([icon, text]) => <ToolLabel key={icon} icon={icon} text={text} />);
}

function TopToolbars() {
  return (
    <>
      <div className="flex h-[34px] border-t border-t-[#808080]">
        <Toolbar label="Standard">
          <button type="button" className="flex w-[66px] items-center gap-1 pl-px">
            <Icon name="nx" />
            Start
            <Caret />
          </button>
          <Tools names={["page", "open", "save"]} />
          <Sep />
          <Tools names={["cut", "copy", "paste", "del"]} />
          <Sep />
          <Tools names={["undo"]} />
          <Sep />
          <Tools names={["info"]} />
          <More />
        </Toolbar>
        <Toolbar label="Ansicht">
          <Tools names={["fit", "fitGrey", "zoomBox", "zoom", "pan"]} />
          <More />
        </Toolbar>
        <Toolbar label="Analyse">
          <Tools names={["measure", "angle"]} />
          <ToolText text="Masseeigenschaften..." width="w-[118px]" />
          <More />
        </Toolbar>
        <Toolbar label="Layer">
          <Tools names={["layer1", "layer2", "layer3"]} />
          <Sep />
          <ToolText text="&Reference Sets..." width="w-[94px]" />
          <Tools names={["refEdit", "ref1", "ref2", "ref3"]} />
          <More />
        </Toolbar>
        <Toolbar label="BCT">
          <Tools names={["bct1", "bct2"]} />
          <More />
        </Toolbar>
      </div>
      <div className="flex h-16">
        <Toolbar label="Zeichnung">
          <Tools names={["newSheet"]} />
          <Sep />
          <div className="flex items-center">
            <button
              type="button"
              aria-label="Basisansicht"
              className="flex h-[30px] w-8 items-center justify-center border border-t-white border-l-white border-r-[#808080] border-b-[#808080]"
            >
              <Icon name="baseView" />
            </button>
            <button
              type="button"
              aria-label="Ansichten"
              className="flex h-[30px] w-[11px] items-center justify-center border border-t-white border-l-white border-r-[#808080] border-b-[#808080]"
            >
              <Caret />
            </button>
          </div>
          <Tools names={["auxView", "detail", "section", "halfSection"]} />
          <Drop />
          <Tools names={["revolved", "folded"]} />
          <Sep />
          <Tools names={["breakView", "breakout"]} />
          <More />
        </Toolbar>
        <Toolbar label="Bemaßung">
          <ToolLabel icon="dimAuto" text={"Ermittelte\nBemaßung"} />
          <Drop />
          <Labels items={LABELS_DIM} />
          <Drop />
          <ToolLabel icon="ordinate" text={"Steigende\nBemaßung"} />
          <More />
        </Toolbar>
        <Toolbar label="Hinweise">
          <Tools names={["fcf", "note", "leader", "target"]} />
          <ToolText text="Ober&flächensymbol..." width="w-[112px]" />
          <Tools names={["balloon", "surface", "hatch"]} />
          <More />
        </Toolbar>
        <Toolbar label="Stil">
          <Tools names={["textStyle", "viewEdit", "styleEdit"]} />
          <Sep />
          <Tools names={["noteEdit", "leaderEdit"]} />
          <More />
        </Toolbar>
        <Toolbar label="Werkzeuge">
          <Tools names={["tools"]} />
          <More />
        </Toolbar>
        <Toolbar label="Tabellen">
          <Tools names={["tab1", "tab2", "tab3", "tab4", "tab5", "tab6", "tab7"]} />
          <Drop />
          <More />
        </Toolbar>
      </div>
    </>
  );
}

function BottomToolbars() {
  return (
    <div className="flex h-16 pl-[283px]">
      <Toolbar label="Fangpunkte">
        <Tools names={["gLine", "gMid", "gSpline", "gArc", "gCenter", "gQuad", "gPlus"]} />
        <More />
      </Toolbar>
      <Toolbar label="Auswahl">
        <Tools names={["filter"]} />
        <Drop narrow />
        <Tools names={["gChain"]} />
        <More />
      </Toolbar>
      <Toolbar label="Kurven">
        <Labels items={LABELS_CURVE} />
        <Sep />
        <Labels items={LABELS_DERIVED} />
        <More />
      </Toolbar>
      <Toolbar label="Kurven bearbeiten">
        <Labels items={LABELS_EDIT} />
        <More />
      </Toolbar>
    </div>
  );
}

/* ---------- window frame ---------- */

const MENU = [
  "&Datei",
  "&Bearbeiten",
  "Ansi&cht",
  "Einfü&gen",
  "&Format",
  "&Werkzeuge",
  "B&augruppen",
  "&Informationen",
  "Ana&lyse",
  "Fenst&er",
  "&Voreinstellungen",
  "3DxNX",
  "&BCT",
  "&Hilfe",
];

function WindowButtons({ gap }: { gap: string }) {
  const cls = `flex h-[14px] w-4 items-center justify-center ${RAISED}`;
  return (
    <div className="flex">
      <button type="button" aria-label="Minimieren" className={cls}>
        <svg width="10" height="9" viewBox="0 0 10 9">
          <path d="M1 7h6v2H1z" />
        </svg>
      </button>
      <button type="button" aria-label="Wiederherstellen" className={cls}>
        <svg width="10" height="9" viewBox="0 0 10 9">
          <path d="M3 0h6v6H7V5h1V2H4v1H3z" />
          <path d="M1 3h6v6H1zM2 5v3h4V5z" fillRule="evenodd" />
        </svg>
      </button>
      <button type="button" aria-label="Schließen" className={`${cls} ${gap}`}>
        <svg width="10" height="9" viewBox="0 0 10 9">
          <path d="M1 1l7 7M8 1L1 8" stroke="#000" strokeWidth="1.6" />
        </svg>
      </button>
    </div>
  );
}

/* ---------- navigator panels ---------- */

function Caption() {
  return (
    <div className="flex h-[21px] shrink-0 items-center gap-[9px] pb-[2px] pl-[2px] pr-1">
      <div className="h-[3px] flex-1 border border-t-white border-l-white border-r-[#808080] border-b-[#808080]" />
      <button type="button" aria-label="Einklappen" className="pt-[2px]">
        <svg width="7" height="4" viewBox="0 0 7 4">
          <path d="M0 4h7L3.500 0z" />
        </svg>
      </button>
      <button type="button" aria-label="Schließen">
        <svg width="7" height="6" viewBox="0 0 7 6">
          <path d="M0.500 0l6 6M6.500 0l-6 6" stroke="#000" strokeWidth="1.6" />
        </svg>
      </button>
    </div>
  );
}

function ScrollBar({ thumb }: { thumb: string }) {
  return (
    <div className={`flex h-4 shrink-0 ${DITHER}`}>
      <button type="button" aria-label="Nach links" className={`flex w-4 items-center justify-center ${RAISED}`}>
        <svg width="4" height="7" viewBox="0 0 4 7">
          <path d="M4 0v7L0 3.500z" />
        </svg>
      </button>
      <div className={`${thumb} ${RAISED}`} />
      <button type="button" aria-label="Nach rechts" className={`ml-auto flex w-4 items-center justify-center ${RAISED}`}>
        <svg width="4" height="7" viewBox="0 0 4 7">
          <path d="M0 0v7L4 3.500z" />
        </svg>
      </button>
    </div>
  );
}

function Splitter() {
  const line = "h-[5px] flex-1 border-y border-y-[#808080] shadow-[0_1px_#ffffff]";
  return (
    <div className="flex h-[9px] shrink-0 items-center gap-[2px]">
      <div className={line} />
      <div className="h-[8px] w-[60px] rounded-[2px] border border-[#808080] bg-white" />
      <div className={line} />
    </div>
  );
}

type GuideKind = "none" | "v" | "tee" | "end" | "dash" | "plusFirst" | "plus" | "minus" | "minusEnd";

function Guide({ kind }: { kind: GuideKind }) {
  const box = kind.startsWith("plus") || kind.startsWith("minus");
  const up = ["v", "tee", "end", "plus", "minus", "minusEnd"].includes(kind);
  const down = ["v", "tee", "plusFirst", "plus", "minus"].includes(kind);
  const across = kind !== "none" && kind !== "v";
  return (
    <svg width="19" height="16" viewBox="0 0 19 16" className="shrink-0" aria-hidden="true">
      <g stroke="#808080" strokeDasharray="1 1">
        {up && <path d="M9.500 0v8" />}
        {down && <path d="M9.500 8v8" />}
        {across && <path d="M9 8.500h10" />}
      </g>
      {box && <rect x="5.500" y="4.500" width="8" height="8" fill="#fff" stroke="#808080" />}
      {box && <path d="M7 8.500h5" stroke="#000" />}
      {kind.startsWith("plus") && <path d="M9.500 6v5" stroke="#000" />}
    </svg>
  );
}

type Mark = "blue" | "green" | "red";

type Row = {
  guides: GuideKind[];
  mark?: Mark;
  icon: string;
  name: string;
  layer?: string;
};

const MARK_COLORS: Record<Mark, string> = { blue: "#101878", green: "#22c03c", red: "#b01424" };

function TreeCheck({ mark, label }: { mark: Mark; label: string }) {
  return (
    <span className="relative flex h-4 w-[17px] shrink-0 items-center">
      <input
        type="checkbox"
        defaultChecked
        aria-label={label}
        className={`ml-[3px] h-[11px] w-[11px] appearance-none ${mark === "blue" ? "" : "border border-black bg-white"}`}
      />
      <svg width="17" height="16" viewBox="0 0 17 16" className="pointer-events-none absolute inset-0" aria-hidden="true">
        {mark === "blue" ? (
          <path d="M2 8l4 4 9-9" fill="none" stroke={MARK_COLORS[mark]} strokeWidth="1.800" />
        ) : (
          <path d="M5 7l3 4 6-8" fill="none" stroke={MARK_COLORS[mark]} strokeWidth="2.500" />
        )}
      </svg>
    </span>
  );
}

const PARTS: Row[] = [{ guides: ["dash"], mark: "red", icon: "cube", name: "testblech" }];

const NODES: Row[] = [
  { guides: ["plusFirst"], icon: "views", name: "Modellansichten" },
  { guides: ["minus"], mark: "blue", icon: "sheets", name: "Drawing" },
  { guides: ["v", "minusEnd"], mark: "blue", icon: "sheet", name: 'Sheet "BLATT_1"' },
  { guides: ["v", "none", "end"], mark: "blue", icon: "imported", name: 'Imported "FRONT@1"' },
  { guides: ["plus"], icon: "folderEq", name: "Anwenderausdrücke" },
  { guides: ["minusEnd"], icon: "folder", name: "Modellhistorie" },
  { guides: ["none", "tee"], mark: "green", icon: "plane", name: "Fixed Datum Plane (0)", layer: "1" },
  { guides: ["none", "tee"], mark: "green", icon: "axis", name: "Fixed Datum Axis (1)", layer: "1" },
  { guides: ["none", "tee"], mark: "green", icon: "axis", name: "Fixed Datum Axis (2)", layer: "1" },
  { guides: ["none", "tee"], mark: "green", icon: "tab", name: "SB Tab (3)", layer: "1" },
  { guides: ["none", "end"], mark: "green", icon: "flange", name: "SB Flange (5)", layer: "1" },
];

function TreeTable({ head, firstCol, sorted, rows }: { head: string[]; firstCol: string; sorted?: boolean; rows: Row[] }) {
  const th =
    "h-[17px] overflow-hidden border-t border-t-white border-b border-b-[#404040] bg-[#d4d0c8] pl-1 text-left font-normal leading-[14px]";
  return (
    <table className="w-full table-fixed border-separate border-spacing-0">
      <thead>
        <tr>
          <th className={`${th} ${firstCol} border-r border-r-[#404040] border-l border-l-white`}>
            {head[0]}
            {sorted && (
              <svg width="9" height="8" viewBox="0 0 9 8" className="ml-[18px] inline">
                <path d="M4 0L0 7h8.500z" fill="none" stroke="#9a968e" />
              </svg>
            )}
          </th>
          <th className={`${th} border-l border-l-white`}>{head[1]}</th>
        </tr>
      </thead>
      <tbody>
        {rows.map((row) => (
          <tr key={row.name} className="h-4">
            <td className="h-4 p-0">
              <div className="flex h-4 items-center">
                {row.guides.map((kind, i) => (
                  <Guide key={i} kind={kind} />
                ))}
                {row.mark && <TreeCheck mark={row.mark} label={row.name} />}
                <span className="flex w-[18px] shrink-0 items-center">
                  <Icon name={row.icon} size={row.icon === "cube" ? 13 : 16} />
                </span>
                <span className="whitespace-nowrap">{row.name}</span>
              </div>
            </td>
            <td className="h-4 p-0 leading-4">{row.layer}</td>
          </tr>
        ))}
      </tbody>
    </table>
  );
}

function Navigator() {
  return (
    <aside className="flex w-[385px] shrink-0 flex-col border-l border-l-white">
      <section className="flex h-[276px] flex-col pl-3 pr-[11px]">
        <Caption />
        <div className="flex-1 overflow-hidden bg-white">
          <TreeTable head={["Teilename", "db_part_name"]} firstCol="w-[204px]" rows={PARTS} />
        </div>
        <ScrollBar thumb="w-[111px]" />
        <Splitter />
        <div className="h-[6px]" />
      </section>
      <div className="ml-2 mr-1 h-[5px] border-t border-t-white border-b border-b-black" />
      <section className="flex min-h-0 flex-1 flex-col pl-3 pr-[11px] pt-px">
        <Caption />
        <div className="min-h-0 flex-1 overflow-hidden bg-white">
          <TreeTable head={["Name", "Layer"]} firstCol="w-[326px]" sorted rows={NODES} />
        </div>
        <ScrollBar thumb="w-[261px]" />
        <Splitter />
        <div className="h-1" />
      </section>
    </aside>
  );
}

const TAB_GROUPS = [
  ["rsPage", "rsHat", "rsHelp"],
  ["rsClock", "rsColors", "rsPeople"],
];

function ResourceBar() {
  return (
    <nav aria-label="Ressourcen" className="flex w-[33px] shrink-0 flex-col gap-3 bg-[#808080] pl-[6px] pt-[15px]">
      {TAB_GROUPS.map((group) => (
        <div key={group[0]}>
          {group.map((name) => (
            <button
              key={name}
              type="button"
              aria-label={name}
              className="flex h-[42px] w-full items-center justify-center rounded-l-[3px] border border-r-0 border-t-white border-l-white border-b-[#404040] bg-[#d4d0c8]"
            >
              <Icon name={name} size={23} />
            </button>
          ))}
        </div>
      ))}
    </nav>
  );
}

/* ---------- drawing area ---------- */

function Drawing() {
  return (
    <main className="relative min-w-0 flex-1 overflow-hidden border-2 border-t-[#24408e] border-l-[#24408e] border-r-[#d8e4fa] border-b-[#d8e4fa] bg-[#3c5fca]">
      <svg className="block h-full w-full" role="img" aria-label="Zeichnung BLATT_1">
        <g transform="translate(-420 -167)" fill="none" stroke="#000">
          <rect x="620.500" y="494.500" width="983" height="254" stroke="#9cc0f4" />

          {/* sheet metal profile */}
          <g strokeWidth="2.500">
            <path d="M778 650V544.500h23.500V654q1 22 24 22.500H1553.500v23H669" />
            <path d="M778 648q3 46 43 51.500" strokeWidth="2" />
          </g>
          <g strokeWidth="1.500">
            <circle cx="778" cy="699.500" r="12.500" />
            <path d="M821 686.500l64 13-64 13z" />
          </g>

          {/* height */}
          <path d="M650.500 524v175M643 543.500h135M643 698.500h27M644 537l13 13" />
          <path d="M650.500 698l-2.500-19h5z" fill="#000" stroke="none" />

          {/* length */}
          <path d="M778.500 650v232M1554.500 699v183M778 874.500h796M1548 881l13-13" />
          <path d="M779 874.500l19-2.500v5z" fill="#000" stroke="none" />

          <g
            fill="#000"
            stroke="none"
            fontFamily="'Roboto Condensed', Roboto, sans-serif"
            fontWeight="300"
            fontSize="38"
            textAnchor="middle"
          >
            <text x="1149" y="867">100,000</text>
            <text transform="translate(643 619) rotate(-90)">20,000</text>
          </g>
        </g>
      </svg>
      <p className="absolute bottom-0 left-[3px] text-sm leading-4 font-['Liberation_Sans']">BLATT_1 (DWG) WORK</p>
    </main>
  );
}

/* ---------- taskbar ---------- */

const QUICK = ["team", "monitor", "ball", "ballMail", "phone", "firefox", "editDoc"];
const TRAY = ["ballMail", "trayPen", "speaker", "nvidia", "panda"];
const TASKS = [
  { icon: "team", text: "Teamcenter Engineering ..." },
  { icon: "cmd", text: "TAO ImR" },
  { icon: "team", text: "Mein Navigator - Teamce..." },
  { icon: "monitor", text: "D380" },
  { icon: "nx", text: "NX 4 - Drafting - [test...", active: true },
];

function Taskbar() {
  const grip = "h-[18px] w-[3px] border border-t-white border-l-white border-r-[#808080] border-b-[#808080]";
  return (
    <footer className="flex h-7 shrink-0 items-center border-t border-t-white pl-[2px] pr-[2px]">
      <button type="button" className={`flex h-[22px] w-[52px] items-center gap-px pl-[2px] font-bold ${RAISED}`}>
        <Icon name="windows" size={16} />
        Start
      </button>
      <div className={`ml-[7px] ${grip}`} />
      <div className="flex w-[170px] pl-[2px]">
        {QUICK.map((name) => (
          <button key={name} type="button" aria-label={name} className="flex w-[23px] justify-center">
            <Icon name={name} size={16} />
          </button>
        ))}
      </div>
      <div className={`mr-1 ${grip}`} />
      <div className="flex gap-[3px]">
        {TASKS.map((task) => (
          <button
            key={task.text}
            type="button"
            className={
              task.active
                ? `flex h-[22px] w-40 items-center gap-[3px] whitespace-nowrap border border-t-[#404040] border-l-[#404040] border-r-white border-b-white pl-1 font-bold ${DITHER}`
                : `flex h-[22px] w-40 items-center gap-[3px] whitespace-nowrap pl-[3px] ${RAISED}`
            }
          >
            <Icon name={task.icon} size={16} />
            {task.text}
          </button>
        ))}
      </div>
      <div className="ml-auto flex h-[22px] w-[134px] items-center gap-[2px] border border-t-[#808080] border-l-[#808080] border-r-white border-b-white pl-[2px]">
        {TRAY.map((name) => (
          <Icon key={name} name={name} size={16} />
        ))}
        <time className="ml-auto pr-[6px]">13:19</time>
      </div>
    </footer>
  );
}

export default function App() {
  const sunken = "border border-t-[#808080] border-l-[#808080] border-r-white border-b-white";
  return (
    <div className="flex h-screen flex-col overflow-hidden bg-[#d4d0c8] text-[11px] leading-[13px] text-black font-['DejaVu_Sans_Condensed','Liberation_Sans',sans-serif]">
      <header className="shrink-0">
        <div className="flex h-[18px] items-center justify-between bg-linear-to-r from-[#0a246a] to-[#a6caf0] pl-[2px] pr-[2px]">
          <h1 className="flex items-center gap-px text-[11px] font-bold text-white">
            <Icon name="nx" size={16} />
            NX 4 - Drafting - [testblech.prt (Geändert) ]
          </h1>
          <WindowButtons gap="ml-[2px]" />
        </div>
        <div className="flex h-[25px] items-center border-t border-t-white pl-[3px] pr-1">
          <div className="h-[19px] w-[3px] border border-t-white border-l-white border-r-[#808080] border-b-[#808080]" />
          <span className="ml-[2px] mr-[5px]">
            <Icon name="compass" size={16} />
          </span>
          <nav aria-label="Menü" className="flex flex-1 gap-[11px]">
            {MENU.map((item) => (
              <button key={item} type="button" className="whitespace-nowrap">
                <Accel text={item} />
              </button>
            ))}
          </nav>
          <WindowButtons gap="" />
        </div>
        <TopToolbars />
        <div className="flex h-[23px] gap-px pb-[2px] pt-px font-bold">
          <div className={`flex w-[932px] items-center pl-px ${sunken}`}>
            Objekte auswählen und MT3 verwenden oder doppelklicken oder Ziehen, um Ansichten, Bemaßungen oder Hinweise zu verschieben
          </div>
          <div className={`flex-1 ${sunken}`} />
          <div className={`w-[19px] ${sunken}`} />
          <div className={`w-[36px] ${sunken}`} />
        </div>
      </header>
      <div className="flex min-h-0 flex-1 border-t border-t-white pr-px">
        <ResourceBar />
        <Navigator />
        <Drawing />
      </div>
      <div className="shrink-0 border-t border-t-white">
        <BottomToolbars />
      </div>
      <Taskbar />
    </div>
  );
}
